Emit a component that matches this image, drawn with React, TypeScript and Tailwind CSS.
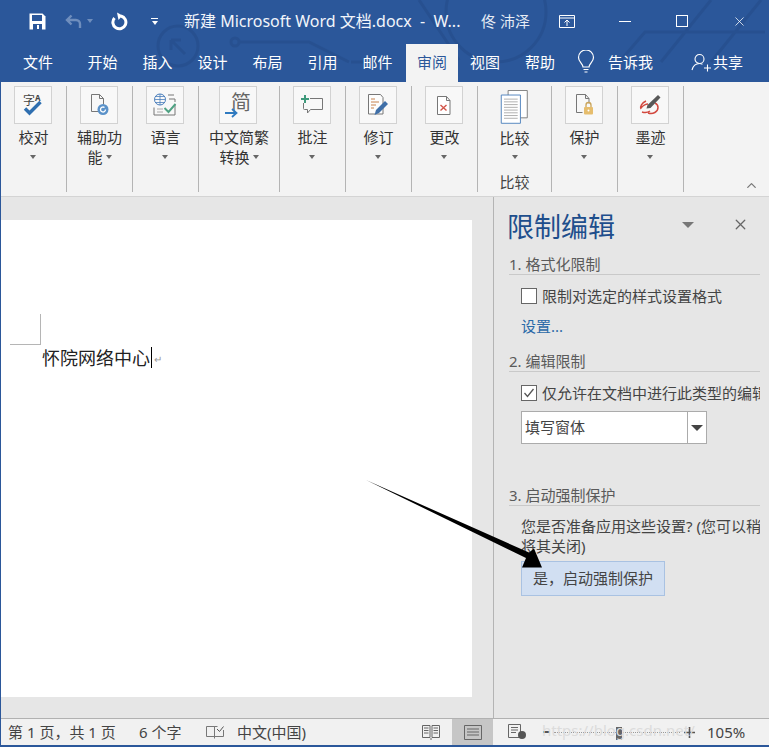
import type { ReactNode } from 'react'
import { ChevronUp, X } from 'lucide-react'

const FONT = "font-['Noto_Sans','Noto_Sans_CJK_SC',sans-serif]"

const Caret = ({ className = '' }: { className?: string }) => (
  <span className={`inline-block w-0 h-0 border-x-[3.5px] border-x-transparent border-t-[4px] border-t-[#666] ${className}`} />
)

const Box = ({ children }: { children: ReactNode }) => (
  <div className="-ml-[2px] w-[38px] h-[38px] bg-[#f8f8f8] border border-[#d2d2d2] flex items-center justify-center">
    {children}
  </div>
)

function RibbonGroup({ width, icon, lines, inlineCaret }: { width: number; icon: ReactNode; lines: string[]; inlineCaret?: boolean }) {
  return (
    <div className="h-[106px] border-r border-[#b4b4b4] flex flex-col items-center text-[15px] leading-[20px] text-[#333] shrink-0" style={{ width }}>
      <Box>{icon}</Box>
      <div className="mt-[3px] text-center whitespace-nowrap">
        {lines[0]}
        <div className="h-[20px] flex items-center justify-center gap-[3px]">
          {lines[1]}
          {(inlineCaret || !lines[1]) && <Caret />}
        </div>
      </div>
    </div>
  )
}

const icons = {
  proof: (
    <svg width="24" height="24" viewBox="0 0 24 24" fill="none">
      <text x="2" y="12" fontSize="12" fill="#444">字</text>
      <text x="14" y="8" fontSize="8" fontWeight="700" fill="#444">A</text>
      <path d="M4 15.500l4.500 4.500 11-11" stroke="#2f6fb0" strokeWidth="3.4" />
    </svg>
  ),
  access: (
    <svg width="24" height="24" viewBox="0 0 24 24" fill="none">
      <path d="M4.500 1.500h8l4 4v6M4.500 1.500v17h7" stroke="#777" />
      <path d="M12.500 1.500v4h4" stroke="#777" />
      <circle cx="16" cy="16.500" r="5.500" fill="#5b92c9" />
      <path d="M18.500 16.500a2.500 2.500 0 11-1-2" stroke="#fff" strokeWidth="1.300" />
    </svg>
  ),
  lang: (
    <svg width="24" height="24" viewBox="0 0 24 24" fill="none">
      <circle cx="7" cy="6.500" r="5.500" stroke="#4a7ebb" />
      <path d="M1.500 6.500h11M7 1v11M3 3.500h8M3 9.500h8" stroke="#4a7ebb" strokeWidth=".8" />
      <path d="M15 2h6M16 6h6v3M1 14.500v7.500h21v-11" stroke="#777" />
      <path d="M4 16h6M4 19h6" stroke="#aaa" />
      <path d="M11.500 15l4 4 7-8" stroke="#4fa283" strokeWidth="1.900" />
    </svg>
  ),
  zh: (
    <svg width="28" height="30" viewBox="0 0 28 30" fill="none">
      <text x="7" y="20" fontSize="20" fill="#666">简</text>
      <path d="M1 23h11M8 19l4.500 4-4.500 4" stroke="#2f7ac0" strokeWidth="1.800" />
    </svg>
  ),
  comment: (
    <svg width="26" height="24" viewBox="0 0 26 24" fill="none">
      <path d="M11 5.500h12.500v11H11.500l-3 3.500v-3.500H5.500a1 1 0 01-1-1V10" stroke="#777" />
      <path d="M6 2v8M2 6h8" stroke="#3f9a7c" strokeWidth="2" />
    </svg>
  ),
  track: (
    <svg width="24" height="24" viewBox="0 0 24 24" fill="none">
      <path d="M2.500 1.500h12l2.500 3v16.500h-14.500z" fill="#fdfdfd" stroke="#777" />
      <path d="M5 6h4M5 9h8M5 12h5M5 15h3" stroke="#c8824f" />
      <path d="M8.500 22l1.500-5 9-9 3 3-9 9z" fill="#3f6fa8" />
    </svg>
  ),
  change: (
    <svg width="24" height="24" viewBox="0 0 24 24" fill="none">
      <path d="M5.500 3.500h9l3.500 4v14H5.500z" fill="#fff" stroke="#777" />
      <path d="M14.500 3.500v4H18" stroke="#777" />
      <path d="M8.500 12l6 5.500M14.500 12l-6 5.500" stroke="#d2554a" strokeWidth="1.400" />
    </svg>
  ),
  protect: (
    <svg width="24" height="24" viewBox="0 0 24 24" fill="none">
      <path d="M4.500 1.500h9l3.500 4v5M4.500 1.500v18h6" stroke="#777" />
      <path d="M13.500 1.500v4H17" stroke="#777" />
      <path d="M14 14v-2a2.500 2.500 0 015 0v2" stroke="#c9a45a" strokeWidth="1.300" />
      <rect x="12" y="14" width="9" height="7.500" rx="1" fill="#e6bd6d" />
      <circle cx="16.500" cy="17.500" r="1" fill="#fff" />
    </svg>
  ),
  ink: (
    <svg width="24" height="24" viewBox="0 0 24 24" fill="none">
      <path d="M8 8c-4 2-6.500 5.500-5 8M3 15c1.500-2 5-4 7-4M10 20c5 1.500 10-1 10-5.500 0-2-1-3.500-3-4.500M4 19c3 1 6 .5 8-1" stroke="#d2483e" strokeWidth="1.500" />
      <path d="M8.500 15.500l1-3.500L20 2l2.500 2.500L12.500 15z" fill="#585858" />
    </svg>
  ),
}

function PaneHeading({ children, className = '' }: { children: ReactNode; className?: string }) {
  return (
    <div className={`mr-[9px] h-[20px] border-b border-[#c9c9c9] box-content text-[15px] leading-[20px] text-[#5a5a5a] ${className}`}>
      {children}
    </div>
  )
}

export default function App() {
  return (
    <div className={`relative w-[769px] h-[747px] overflow-hidden bg-[#e6e6e6] border-l border-b-2 border-[#2b579a] ${FONT}`}>
      {/* title bar */}
      <div className="relative h-[82px] bg-[#2b579a] text-white">
        <svg className="absolute left-[150px] top-0 opacity-[.16]" width="619" height="82" viewBox="0 0 619 82" fill="none" stroke="#14305f" strokeWidth="3">
          <circle cx="27" cy="46" r="20" />
          <path d="M20 40l14 14M20 40h10M20 40v10" />
          <circle cx="84" cy="42" r="4" />
          <path d="M88 42h70l40 20M200 62h30M268 0l40 60" />
          <circle cx="345" cy="12" r="50" />
          <path d="M470 60l24-28h120M560 0l-50 62M610 0l-50 62" />
        </svg>
        <div className="relative flex items-center h-[42px]">
          <svg className="ml-[28px]" width="17" height="17" viewBox="0 0 17 17" fill="none">
            <path d="M.5.500h13l3 3v13H.5z" fill="#fff" />
            <rect x="3" y="2" width="10" height="6" fill="#2b579a" />
            <rect x="4" y="11" width="9" height="6" fill="#2b579a" />
            <rect x="8" y="12" width="2" height="4" fill="#fff" />
          </svg>
          <svg className="ml-[19px]" width="18" height="15" viewBox="0 0 18 15" fill="none" stroke="#6f8ebd" strokeWidth="2.400">
            <path d="M6.500 1.500L2 6l4.500 4.500M2 6h9a4 4 0 014 4v4" />
          </svg>
          <Caret className="ml-[4px] !border-t-[#6f8ebd]" />
          <svg className="ml-[16px]" width="19" height="19" viewBox="0 0 19 19" fill="none">
            <path d="M5.500 6a6.500 6.500 0 106.500-2" stroke="#fff" strokeWidth="3" />
            <path d="M8 .5l5.500 3L9.500 8z" fill="#fff" />
          </svg>
          <div className="ml-[23px] w-[7px] flex flex-col items-center gap-[2px]">
            <span className="w-[7px] h-px bg-white" />
            <Caret className="!border-t-white" />
          </div>
          <div className="ml-[26px] w-[273px] text-[16px] leading-[20px] whitespace-pre text-[#f2f5fa]">新建 Microsoft Word 文档.docx  -  W...</div>
          <div className="ml-[24px] w-[58px] text-[15px] whitespace-pre text-[#e6ecf5]">佟 沛泽</div>
          <svg className="ml-[20px]" width="16" height="13" viewBox="0 0 16 13" fill="none" stroke="#fff">
            <path d="M.5.500h15v12H.5zM.5 3h15M8 11V5M5.500 7.500L8 5l2.500 2.500" />
          </svg>
          <span className="ml-[44px] w-[12px] h-px bg-white" />
          <span className="ml-[45px] w-[12px] h-[12px] border border-white" />
          <X className="ml-[44px]" size={15} strokeWidth={1.2} color="#fff" />
        </div>
        <div className="relative flex h-[40px] pb-px text-[15px] leading-[20px]">
          <div className="w-[74px] flex items-center justify-center">文件</div>
          {['开始', '插入', '设计', '布局', '引用', '邮件'].map((t) => (
            <div key={t} className="w-[55px] flex items-center justify-center">{t}</div>
          ))}
          <div className="ml-px -mb-px mt-[2px] w-[52px] bg-[#f3f3f3] text-[#2b579a] flex items-center justify-center pb-[3px]">审阅</div>
          <div className="w-[54px] flex items-center justify-center">视图</div>
          <div className="ml-px w-[54px] flex items-center justify-center">帮助</div>
          <svg className="ml-[10px] self-center" width="18" height="24" viewBox="0 0 18 24" fill="none" stroke="#fff" strokeWidth="1.200">
            <path d="M6 17c0-3-4.500-5-4.500-9.500a7.500 7.500 0 0115 0C16.500 12 12 14 12 17zM6.500 19.500h5M7.500 22h3" />
          </svg>
          <div className="ml-[13px] flex items-center">告诉我</div>
          <div className="ml-[38px] flex items-center">
            <svg width="20" height="20" viewBox="0 0 20 20" fill="none" stroke="#fff" strokeWidth="1.100">
              <circle cx="8.500" cy="7" r="4.500" />
              <path d="M1 18c1-4 3.500-6.500 7.500-6.500 1 0 2 .2 3 .7M13 16h7M16.500 12.500v7" />
            </svg>
            <span className="ml-[2px]">共享</span>
          </div>
        </div>
      </div>

      {/* ribbon */}
      <div className="relative h-[115px] bg-[#f3f3f3] border-b border-[#d4d4d4] pt-[4px] flex items-start">
        <RibbonGroup width={66} icon={icons.proof} lines={['校对', '']} />
        <RibbonGroup width={66} icon={icons.access} lines={['辅助功', '能']} inlineCaret />
        <RibbonGroup width={66} icon={icons.lang} lines={['语言', '']} />
        <RibbonGroup width={81} icon={icons.zh} lines={['中文简繁', '转换']} inlineCaret />
        <RibbonGroup width={66} icon={icons.comment} lines={['批注', '']} />
        <RibbonGroup width={66} icon={icons.track} lines={['修订', '']} />
        <RibbonGroup width={66} icon={icons.change} lines={['更改', '']} />
        <div className="w-[74px] h-[106px] border-r border-[#b4b4b4] flex flex-col items-center text-[15px] leading-[20px] text-[#333] shrink-0">
          <svg className="mt-[4px]" width="31" height="37" viewBox="0 0 31 37" fill="none">
            <path d="M8.500.5h21v30h-21z" fill="#fff" stroke="#777" />
            <path d="M1 5.500h21v31H1z" fill="#fff" stroke="#4a7ebb" />
            <path d="M4 10h15M4 13h15M4 16h15M4 19h15M4 22h15M4 25h15M4 28h15M4 31h15" stroke="#a9a9a9" />
          </svg>
          <div className="mt-[4px]">比较</div>
          <div className="h-[20px] flex items-center"><Caret /></div>
          <div className="mt-[6px] text-[#444]">比较</div>
        </div>
        <RibbonGroup width={66} icon={icons.protect} lines={['保护', '']} />
        <RibbonGroup width={66} icon={icons.ink} lines={['墨迹', '']} />
        <ChevronUp className="absolute right-[10px] bottom-[3px]" size={15} strokeWidth={2} color="#777" />
      </div>

      {/* document + pane */}
      <div className="flex h-[521px] text-[15px] leading-[20px]">
        <div className="w-[492px] shrink-0 pt-[23px]">
          <div className="w-[471px] h-[477px] bg-white">
            <div className="ml-[9px] pt-[94px] w-[31px]">
              <div className="h-[31px] border-r border-b border-[#b5b5b5]" />
            </div>
            <div className="ml-[41px] -mt-px flex items-center text-[18px] leading-[24px] text-[#222]">
              怀院网络中心
              <span className="ml-px w-px h-[21px] bg-black" />
              <span className="ml-[2px] mt-[3px] text-[10px] text-[#999]">↵</span>
            </div>
          </div>
        </div>
        <div className="flex-1 min-w-0 overflow-hidden border-l border-[#b4b4b4] pl-[15px]">
          <div className="flex items-center h-[36px] mt-[12px] -ml-[2px]">
            <span className="w-[108px] text-[27px] leading-[36px] text-[#1e4e8c] whitespace-nowrap">限制编辑</span>
            <span className="ml-[67px] w-0 h-0 border-x-[6px] border-x-transparent border-t-[6px] border-t-[#777] -mt-[5px]" />
            <X className="ml-[38px] -mt-[5px]" size={17} strokeWidth={1.8} color="#666" />
          </div>
          <PaneHeading className="mt-[9px]">1. 格式化限制</PaneHeading>
          <div className="ml-[12px] mt-[11px] flex items-center h-[20px] gap-[5px] text-[#444] whitespace-nowrap">
            <span className="w-[16px] h-[16px] bg-white border border-[#666]" />
            限制对选定的样式设置格式
          </div>
          <div className="ml-[12px] mt-[10px] text-[#2b6aa8]">设置...</div>
          <PaneHeading className="mt-[15px]">2. 编辑限制</PaneHeading>
          <div className="mt-[11px] mr-[9px] overflow-hidden pl-[12px] flex items-center h-[20px] gap-[5px] text-[#444] whitespace-nowrap">
            <span className="shrink-0 w-[16px] h-[16px] bg-white border border-[#666] flex items-center justify-center">
              <svg width="12" height="12" viewBox="0 0 12 12" fill="none" stroke="#555" strokeWidth="1.300"><path d="M1.500 6l3 3.500 6-7.500" /></svg>
            </span>
            仅允许在文档中进行此类型的编辑
          </div>
          <div className="ml-[12px] mt-[8px] w-[186px] h-[33px] bg-white border border-[#ababab] flex items-center text-[#444]">
            <span className="flex-1 pl-[3px] pb-[2px]">填写窗体</span>
            <span className="w-[19px] h-full border-l border-[#ababab] flex items-center justify-center">
              <span className="w-0 h-0 border-x-[6px] border-x-transparent border-t-[6px] border-t-[#444]" />
            </span>
          </div>
          <PaneHeading className="mt-[41px]">3. 启动强制保护</PaneHeading>
          <div className="mt-[10px] mr-[9px] pl-[12px] overflow-hidden text-[#444] whitespace-nowrap">
            您是否准备应用这些设置? (您可以稍后
            <br />
            将其关闭)
          </div>
          <div className="ml-[12px] mt-[5px] w-[144px] h-[35px] bg-[#d1dff2] border border-[#a9c2e2] pl-[11px] pb-[2px] flex items-center text-[#444]">是，启动强制保护</div>
        </div>
      </div>

      {/* status bar */}
      <div className="relative flex items-center h-[27px] bg-[#f1f1f1] border-t border-[#b1b1b1] text-[15px] leading-[20px] text-[#444] whitespace-pre">
        <span className="ml-[7px] w-[109px]">第 1 页，共 1 页</span>
        <span className="ml-[22px] w-[43px]">6 个字</span>
        <svg className="ml-[24px]" width="18" height="16" viewBox="0 0 18 16" fill="none" stroke="#777">
          <path d="M8.500 2.500h-8v10h8zM8.500 2.500v12M8.500 2.500h3M17.500 6v6.500h-9" />
          <path d="M11 5l2.500 2.500 4-5" stroke="#555" />
        </svg>
        <span className="ml-[13px] w-[68px]">中文(中国)</span>
        <svg className="ml-[116px]" width="20" height="15" viewBox="0 0 20 15" fill="none" stroke="#666">
          <path d="M1.500.500h7.500v12H1.500zM11 .500h7.500v12H11zM3 3h4.500M3 5.500h4.500M3 8h4.500M12.500 3H17M12.500 5.500H17M12.500 8H17M10 13v2" />
        </svg>
        <div className="ml-[11px] w-[41px] h-full bg-[#c6c6c6] flex items-center justify-center">
          <svg width="18" height="15" viewBox="0 0 18 15" fill="none" stroke="#666">
            <path d="M.5.500h17v14H.5zM3 4h12M3 7h12M3 10h12" />
          </svg>
        </div>
        <svg className="ml-[15px]" width="19" height="16" viewBox="0 0 19 16" fill="none" stroke="#666">
          <path d="M.5.500h12v13H.5zM3 3.500h7M3 6h7M3 8.500h5" />
          <circle cx="14" cy="11" r="4" fill="#555" stroke="none" />
        </svg>
        <span className="ml-[16px] w-[7px] h-[2px] bg-[#555]" />
        <div className="relative ml-[4px] w-[126px] h-[1px] border-t border-dotted border-[#999]">
          <span className="absolute left-[62px] -top-[6px] w-[6px] h-[13px] bg-[#666]" />
        </div>
        <svg className="ml-[4px]" width="11" height="11" viewBox="0 0 11 11" stroke="#555" strokeWidth="1.600"><path d="M5.500 0v11M0 5.500h11" /></svg>
        <span className="ml-[12px] text-[15px]">105%</span>
        <span className="absolute left-[541px] top-[1px] text-[15px] text-[#dcdcdc] pointer-events-none">https://blog.csdn.net/</span>
      </div>

      {/* annotation arrow drawn over the page */}
      <svg className="absolute left-0 top-0 pointer-events-none" width="769" height="747" viewBox="0 0 769 747">
        <path d="M365 480l163 72.500 5-4 8 19h-20l4-9.500z" fill="#000" />
      </svg>
    </div>
  )
}
